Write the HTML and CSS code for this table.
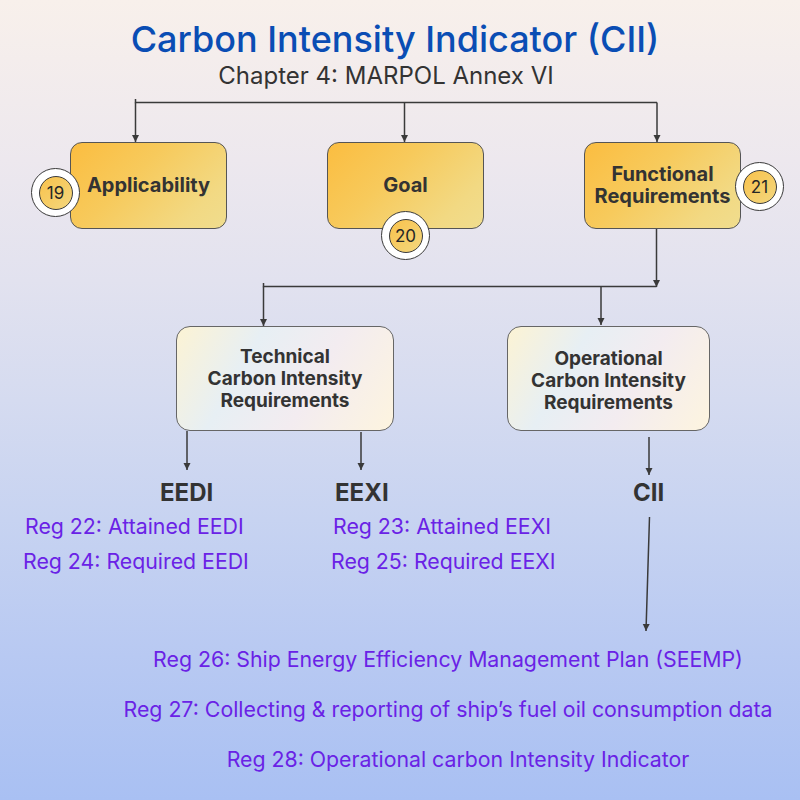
FILE: index.html
```html
<!DOCTYPE html>
<html lang="en">
<head>
<meta charset="utf-8">
<title>Carbon Intensity Indicator (CII)</title>
<link rel="stylesheet" href="styles.css">
</head>
<body>
<div class="page">
  <header class="head">
    <h1 class="title">Carbon Intensity Indicator (CII)</h1>
    <p class="subtitle">Chapter 4: MARPOL Annex VI</p>
  </header>

  <div class="row row-top">
    <div class="node node-gold">
      <span class="node-text">Applicability</span>
      <span class="badge badge-19"><span class="badge-in">19</span></span>
    </div>
    <div class="node node-gold">
      <span class="node-text">Goal</span>
      <span class="badge badge-20"><span class="badge-in">20</span></span>
    </div>
    <div class="node node-gold">
      <span class="node-text">Functional<br>Requirements</span>
      <span class="badge badge-21"><span class="badge-in">21</span></span>
    </div>
  </div>

  <div class="row row-mid">
    <div class="node node-pale node-tech">
      <span class="node-text">Technical<br>Carbon Intensity<br>Requirements</span>
    </div>
    <div class="node node-pale node-oper">
      <span class="node-text">Operational<br>Carbon Intensity<br>Requirements</span>
    </div>
  </div>

  <div class="tier">
    <div class="col col-eedi">
      <div class="label label-eedi">EEDI</div>
      <div class="reg reg-22">Reg 22: Attained EEDI</div>
      <div class="reg">Reg 24: Required EEDI</div>
    </div>
    <div class="col col-eexi">
      <div class="label label-eexi">EEXI</div>
      <div class="reg reg-23">Reg 23: Attained EEXI</div>
      <div class="reg">Reg 25: Required EEXI</div>
    </div>
    <div class="col col-cii">
      <div class="label">CII</div>
    </div>
  </div>

  <div class="bottom">
    <div class="reg reg-wide">Reg 26: Ship Energy Efficiency Management Plan (SEEMP)</div>
    <div class="reg reg-wide">Reg 27: Collecting &amp; reporting of ship’s fuel oil consumption data</div>
    <div class="reg reg-wide reg-28">Reg 28: Operational carbon Intensity Indicator</div>
  </div>

  <svg class="wires" width="800" height="800" viewBox="0 0 800 800" aria-hidden="true">
    <defs>
      <marker id="tip" markerUnits="userSpaceOnUse" markerWidth="8" markerHeight="8" refX="7" refY="3.5" orient="auto">
        <path d="M0,0 L7,3.5 L0,7 z" fill="#3a3a3a"/>
      </marker>
    </defs>
    <g stroke="#3a3a3a" stroke-width="1.5" fill="none">
      <path d="M135.5,99 L135.5,102.5 L657,102.5"/>
      <path d="M135.5,102.5 L135.5,142" marker-end="url(#tip)"/>
      <path d="M404.5,102.5 L404.5,142" marker-end="url(#tip)"/>
      <path d="M657,102.5 L657,142" marker-end="url(#tip)"/>
      <path d="M656.5,229 L656.5,287" marker-end="url(#tip)"/>
      <path d="M263.5,283 L263.5,286.5 L656.5,286.5"/>
      <path d="M263.5,286.5 L263.5,326" marker-end="url(#tip)"/>
      <path d="M601,286.5 L601,325" marker-end="url(#tip)"/>
      <path d="M187,431 L187,470" marker-end="url(#tip)"/>
      <path d="M361,432 L361,470" marker-end="url(#tip)"/>
      <path d="M649,437 L649,475" marker-end="url(#tip)"/>
      <path d="M649.5,517 L646,631" marker-end="url(#tip)"/>
    </g>
  </svg>
</div>
</body>
</html>
```

FILE: styles.css
```css
* { box-sizing: border-box; }

html, body {
  margin: 0;
  padding: 0;
}

body {
  width: 800px;
  height: 800px;
  overflow: hidden;
  font-family: Inter, "Noto Sans", "DejaVu Sans", sans-serif;
  background: linear-gradient(180deg,
    #f8f0eb 0%,
    #ede8ee 20%,
    #e2e2ef 35%,
    #d5dbf0 50%,
    #c7d3f1 65%,
    #b8c9f2 82%,
    #a9c0f3 100%);
}

.page {
  position: relative;
  width: 800px;
  height: 800px;
}

.head {
  padding-top: 17px;
  text-align: center;
}

.title {
  margin: 0;
  padding-right: 10px;
  font-size: 36px;
  line-height: 44px;
  font-weight: 500;
  color: #0a4db4;
}

.subtitle {
  margin: 0;
  padding-right: 28px;
  font-size: 24px;
  line-height: 29px;
  font-weight: 400;
  color: #333333;
}

.row {
  display: flex;
}

.row-top {
  margin-top: 52px;
  padding-left: 70px;
  gap: 100px;
}

.node {
  position: relative;
  display: flex;
  align-items: center;
  justify-content: center;
  text-align: center;
  border: 1px solid #555555;
  border-radius: 12px;
  color: #333333;
  font-weight: 700;
}

.node-gold {
  width: 157px;
  height: 87px;
  font-size: 20px;
  line-height: 22px;
  background: linear-gradient(135deg, #fbbd40 0%, #f7ca5c 40%, #f2d983 80%, #f0dd8e 100%);
}

.node-gold .node-text {
  padding-bottom: 2px;
}

.row-mid {
  margin-top: 97px;
  padding-left: 176px;
  gap: 113px;
}

.node-pale {
  height: 105px;
  font-size: 19px;
  line-height: 22px;
  border-radius: 14px;
  border-color: #666666;
  background: linear-gradient(120deg, #fcf3d4 0%, #e7eff4 32%, #f3ecf0 62%, #fdf4df 100%);
}

.node-tech {
  width: 218px;
}

.node-oper {
  width: 203px;
  padding-top: 4px;
}

.badge {
  position: absolute;
  width: 49px;
  height: 49px;
  border-radius: 50%;
  background: #ffffff;
  border: 1.5px solid #3a3a3a;
  display: flex;
  align-items: center;
  justify-content: center;
}

.badge-in {
  width: 34px;
  height: 34px;
  border-radius: 50%;
  border: 1px solid #3a3a3a;
  background: linear-gradient(135deg, #f9c24c 0%, #f3d77e 100%);
  display: flex;
  align-items: center;
  justify-content: center;
  font-size: 17px;
  font-weight: 400;
  color: #262626;
}

.badge-19 { left: -40px; top: 25px; }
.badge-20 { left: 53px; top: 68px; }
.badge-21 { left: 150px; top: 19px; }

.tier {
  display: flex;
  margin-top: 46px;
  padding-left: 23px;
}

.col {
  display: flex;
  flex-direction: column;
  align-items: flex-start;
}

.col-eedi { width: 308px; }
.col-eexi { width: 302px; }

.label {
  font-size: 24px;
  line-height: 32px;
  font-weight: 700;
  color: #333333;
}

.label-eedi { margin-left: 137px; }
.label-eexi { margin-left: 4px; }

.reg {
  font-size: 21.3px;
  line-height: 35px;
  font-weight: 400;
  color: #6a22e6;
  white-space: nowrap;
}

.reg-22, .reg-23 { margin-left: 2px; }

.bottom {
  margin-top: 55px;
  padding-left: 96px;
  display: flex;
  flex-direction: column;
  align-items: center;
}

.reg-wide {
  line-height: 50px;
}

.reg-28 {
  margin-left: 20px;
}

.wires {
  position: absolute;
  left: 0;
  top: 0;
  pointer-events: none;
}
```
